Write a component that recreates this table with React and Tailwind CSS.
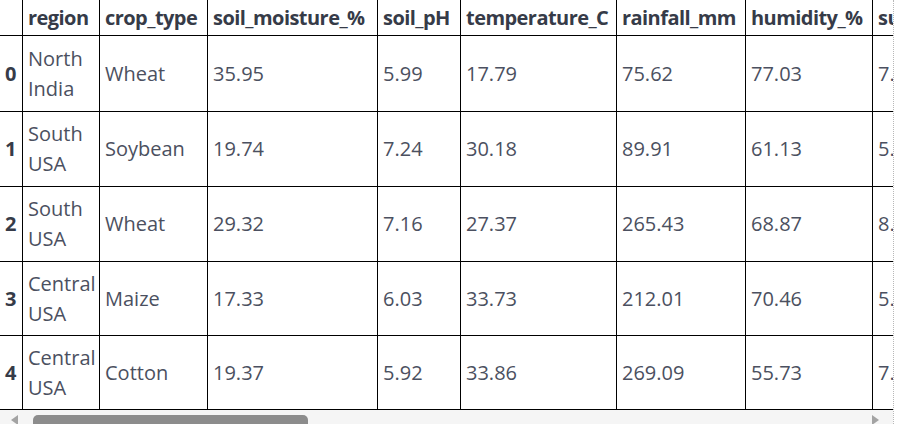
import React from "react";

const cols = [
  { key: "idx", w: "w-[23px]" },
  { key: "region", w: "w-[77px]" },
  { key: "crop_type", w: "w-[108px]" },
  { key: "soil_moisture_%", w: "w-[170px]" },
  { key: "soil_pH", w: "w-[83px]" },
  { key: "temperature_C", w: "w-[156px]" },
  { key: "rainfall_mm", w: "w-[129px]" },
  { key: "humidity_%", w: "w-[127px]" },
  { key: "sunlight_hours", w: "w-[170px]" },
];

const rows = [
  { h: "h-[76px]", d: ["0", ["North", "India"], "Wheat", "35.95", "5.99", "17.79", "75.62", "77.03", "7.27"] },
  { h: "h-[75px]", d: ["1", ["South", "USA"], "Soybean", "19.74", "7.24", "30.18", "89.91", "61.13", "5.67"] },
  { h: "h-[75px]", d: ["2", ["South", "USA"], "Wheat", "29.32", "7.16", "27.37", "265.43", "68.87", "8.23"] },
  { h: "h-[74px]", d: ["3", ["Central", "USA"], "Maize", "17.33", "6.03", "33.73", "212.01", "70.46", "5.89"] },
  { h: "h-[74px]", d: ["4", ["Central", "USA"], "Cotton", "19.37", "5.92", "33.86", "269.09", "55.73", "7.15"] },
];

export default function App() {
  return (
    <div className="w-[904px] h-[424px] bg-white overflow-hidden" style={{ fontFamily: '"Open Sans", "Noto Sans", sans-serif' }}>
      <div className="w-[894px] h-[424px] border-r border-dotted border-[#b8b8b8] flex flex-col overflow-hidden">
        <div className="h-[410px] overflow-hidden">
          <div className="w-[1100px]">
            <div className="flex h-[36px] border-b border-black text-[20px] font-bold text-[#363b48] tracking-[-0.55px]">
              {cols.map((c, i) => (
                <div key={c.key} className={`${c.w} shrink-0 flex items-center px-[5px] border-r border-black leading-[30px] whitespace-nowrap overflow-hidden`}>
                  {i === 0 ? "" : c.key}
                </div>
              ))}
            </div>
            {rows.map((r, ri) => (
              <div key={ri} className={`flex ${r.h} border-b border-black text-[20px] leading-[30px]`}>
                {r.d.map((v, ci) => (
                  <div
                    key={ci}
                    className={`${cols[ci].w} shrink-0 flex items-center border-r border-black ${ci === 0 ? "pl-[5px] font-bold text-[#363b48]" : "px-[5px] text-[#4b5060]"} whitespace-nowrap`}
                  >
                    {Array.isArray(v) ? (
                      <div className="flex flex-col">
                        <span>{v[0]}</span>
                        <span>{v[1]}</span>
                      </div>
                    ) : (
                      v
                    )}
                  </div>
                ))}
              </div>
            ))}
          </div>
        </div>
        <div className="h-[14px] bg-[#f5f5f5] relative flex items-end">
          <div className="ml-[11px] w-0 h-0 border-t-[5px] border-b-[5px] border-r-[7px] border-t-transparent border-b-transparent border-r-[#a3a3a3] mb-[-1px]" />
          <div className="ml-[15px] w-[275px] h-[9px] rounded-t-[5px] bg-[#8c8c8c]" />
          <div className="ml-[564px] w-0 h-0 border-t-[5px] border-b-[5px] border-l-[7px] border-t-transparent border-b-transparent border-l-[#a3a3a3] mb-[-1px]" />
        </div>
      </div>
    </div>
  );
}
